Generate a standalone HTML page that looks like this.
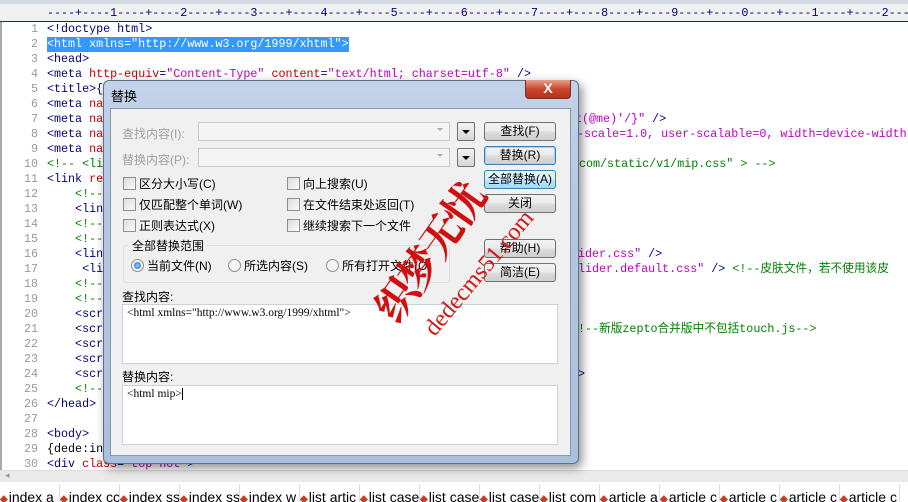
<!DOCTYPE html>
<html><head><meta charset="utf-8"><style>
body{margin:0;width:908px;height:502px;overflow:hidden;background:#fff;position:relative;font-family:"Liberation Mono","Noto Sans CJK SC",monospace}
.a{position:absolute}
.ln{position:absolute;left:0;width:38px;text-align:right;color:#999;font-size:11.7px}
.c{position:absolute;left:47px;font-size:11.7px;white-space:pre;color:#000080;line-height:15px}
.r{color:#c00000}.v{color:#c000c0}.g{color:#008000}.k{color:#000080}
.ui{font-family:"Liberation Sans","Noto Sans CJK SC",sans-serif;font-size:12px;color:#000}
.btn{position:absolute;left:484px;width:70px;height:17px;border:1px solid #707070;border-radius:3px;background:linear-gradient(#f2f2f2,#ebebeb 50%,#dddddd 51%,#cfcfcf);text-align:center;line-height:17px}
.cb{position:absolute;width:11px;height:11px;border:1px solid #8f8f8f;background:linear-gradient(135deg,#dcdcdc,#fbfbfb)}
.rd{position:absolute;width:11px;height:11px;border:1px solid #8f8f8f;border-radius:50%;background:#f4f4f4}
.dd{position:absolute;left:457px;width:16px;height:17px;border:1px solid #707070;border-radius:2px;background:linear-gradient(#f2f2f2,#d6d6d6)}
.dd:after{content:"";position:absolute;left:4px;top:7px;border:4px solid transparent;border-top:4px solid #000;border-bottom:0}
.tab{position:absolute;top:484px;height:18px;width:59px;border-right:1px solid #ddd;font-family:"Liberation Sans",sans-serif;font-size:14px;white-space:nowrap;overflow:hidden;line-height:26px}
.tab b{color:#c0402a;font-size:10px;margin-right:1px}
</style></head><body>
<div class="a" style="left:0;top:0;width:908px;height:4px;background:#d4d9e2"></div>
<div class="a" style="left:0;top:4px;width:908px;height:17px;background:#f0f0f0;border-bottom:1px solid #1a2a6a"></div>
<div class="a" style="left:47px;top:6px;font-size:11.7px;color:#000080;white-space:pre;font-family:'Liberation Mono',monospace">----+----1----+----2----+----3----+----4----+----5----+----6----+----7----+----8----+----9----+----0----+----1----+----2----</div>
<div class="a" style="left:0;top:22px;width:2px;height:450px;background:#aaa"></div>

<div class="ln" style="top:22px">1</div><div class="c" style="top:22px">&lt;!doctype html&gt;</div>
<div class="ln" style="top:37px">2</div><div class="c" style="top:37px;background:#3399ff;color:#fff">&lt;html xmlns="http://www.w3.org/1999/xhtml"&gt;</div>
<div class="ln" style="top:52px">3</div><div class="c" style="top:52px">&lt;head&gt;</div>
<div class="ln" style="top:67px">4</div><div class="c" style="top:67px">&lt;meta <span class="r">http-equiv</span>=<span class="v">"Content-Type"</span> <span class="r">content</span>=<span class="v">"text/html; charset=utf-8"</span> /&gt;</div>
<div class="ln" style="top:82px">5</div><div class="c" style="top:82px">&lt;title&gt;{</div>
<div class="ln" style="top:97px">6</div><div class="c" style="top:97px">&lt;meta <span class="r">na</span></div>
<div class="ln" style="top:112px">7</div><div class="c" style="top:112px">&lt;meta <span class="r">na</span></div>
<div class="ln" style="top:127px">8</div><div class="c" style="top:127px">&lt;meta <span class="r">na</span></div>
<div class="ln" style="top:142px">9</div><div class="c" style="top:142px">&lt;meta <span class="r">na</span></div>
<div class="ln" style="top:157px">10</div><div class="c g" style="top:157px">&lt;!-- &lt;li</div>
<div class="ln" style="top:172px">11</div><div class="c" style="top:172px">&lt;link <span class="r">re</span></div>
<div class="ln" style="top:187px">12</div><div class="c g" style="top:187px">    &lt;!--</div>
<div class="ln" style="top:202px">13</div><div class="c" style="top:202px">    &lt;lin</div>
<div class="ln" style="top:217px">14</div><div class="c g" style="top:217px">    &lt;!--</div>
<div class="ln" style="top:232px">15</div><div class="c g" style="top:232px">    &lt;!--</div>
<div class="ln" style="top:247px">16</div><div class="c" style="top:247px">    &lt;lin</div>
<div class="ln" style="top:262px">17</div><div class="c" style="top:262px">     &lt;li</div>
<div class="ln" style="top:277px">18</div><div class="c g" style="top:277px">    &lt;!--</div>
<div class="ln" style="top:292px">19</div><div class="c g" style="top:292px">    &lt;!--</div>
<div class="ln" style="top:307px">20</div><div class="c" style="top:307px">    &lt;scr</div>
<div class="ln" style="top:322px">21</div><div class="c" style="top:322px">    &lt;scr</div>
<div class="ln" style="top:337px">22</div><div class="c" style="top:337px">    &lt;scr</div>
<div class="ln" style="top:352px">23</div><div class="c" style="top:352px">    &lt;scr</div>
<div class="ln" style="top:367px">24</div><div class="c" style="top:367px">    &lt;scr</div>
<div class="ln" style="top:382px">25</div><div class="c g" style="top:382px">    &lt;!--</div>
<div class="ln" style="top:397px">26</div><div class="c" style="top:397px">&lt;/head&gt;</div>
<div class="ln" style="top:412px">27</div>
<div class="ln" style="top:427px">28</div><div class="c" style="top:427px">&lt;body&gt;</div>
<div class="ln" style="top:442px">29</div><div class="c" style="top:442px;color:#000">{dede:in</div>
<div class="ln" style="top:457px">30</div><div class="c" style="top:457px">&lt;div <span class="r">class</span>=<span class="v">"top hot"</span>&gt;</div>

<div class="c" style="left:575px;top:112px"><span class="v">t(@me)'/}"</span> /&gt;</div>
<div class="c v" style="left:577px;top:127px">-scale=1.0, user-scalable=0, width=device-width</div>
<div class="c g" style="left:579px;top:157px">com/static/v1/mip.css" &gt; --&gt;</div>
<div class="c" style="left:578px;top:247px"><span class="v">ider.css"</span> /&gt;</div>
<div class="c" style="left:578px;top:262px"><span class="v">lider.default.css"</span> /&gt; <span class="g">&lt;!--皮肤文件，若不使用该皮</span></div>
<div class="c g" style="left:578px;top:322px">!--新版zepto合并版中不包括touch.js--&gt;</div>
<div class="c" style="left:578px;top:367px">&gt;</div>

<div class="a" style="left:0;top:470px;width:908px;height:12px;background:#eaeaea;border-top:1px solid #ddd"></div>
<div class="a" style="left:5px;top:471px;font-size:9px;color:#999">◂</div>
<div class="a" style="left:0;top:482px;width:908px;height:20px;background:#fff"></div>
<div class="tab" style="left:0"><b>◆</b>index a</div>
<div class="tab" style="left:60px"><b>◆</b>index cc</div>
<div class="tab" style="left:120px"><b>◆</b>index ss</div>
<div class="tab" style="left:180px"><b>◆</b>index ss</div>
<div class="tab" style="left:240px"><b>◆</b>index w</div>
<div class="tab" style="left:300px"><b>◆</b>list artic</div>
<div class="tab" style="left:360px"><b>◆</b>list case</div>
<div class="tab" style="left:420px"><b>◆</b>list case</div>
<div class="tab" style="left:480px"><b>◆</b>list case</div>
<div class="tab" style="left:540px"><b>◆</b>list com</div>
<div class="tab" style="left:600px"><b>◆</b>article a</div>
<div class="tab" style="left:660px"><b>◆</b>article c</div>
<div class="tab" style="left:720px"><b>◆</b>article c</div>
<div class="tab" style="left:780px"><b>◆</b>article c</div>
<div class="tab" style="left:840px"><b>◆</b>article c</div>

<!-- dialog -->
<div class="a" style="left:103px;top:80px;width:474px;height:382px;border:1px solid #5d6f88;border-radius:6px;background:linear-gradient(180deg,#c3d3e8,#b4c8e2 30%,#a9c0dd);box-shadow:3px 4px 10px rgba(0,0,0,.45)"></div>
<div class="a ui" style="left:111px;top:86px;font-size:13px">替换</div>
<div class="a" style="left:525px;top:80px;width:44px;height:18px;border:1px solid #7a2b22;border-top:0;border-radius:0 0 4px 4px;background:linear-gradient(#e7a08e,#c9462e 50%,#b83118);color:#fff;text-align:center;font:bold 14px 'Liberation Sans',sans-serif;line-height:17px">X</div>
<div class="a" style="left:110px;top:108px;width:459px;height:346px;background:#f0f0f0;border:1px solid #8797ab"></div>

<div class="a ui" style="left:122px;top:125px;color:#a0a0a0">查找内容(I):</div>
<div class="a" style="left:198px;top:122px;width:250px;height:17px;border:1px solid #c8c8c8;background:#f4f4f4"></div>
<div class="a" style="left:437px;top:128px;border:3px solid transparent;border-top:3px solid #aaa"></div>
<div class="dd" style="top:122px"></div>
<div class="a ui" style="left:122px;top:151px;color:#a0a0a0">替换内容(P):</div>
<div class="a" style="left:198px;top:148px;width:250px;height:17px;border:1px solid #c8c8c8;background:#f4f4f4"></div>
<div class="a" style="left:437px;top:154px;border:3px solid transparent;border-top:3px solid #aaa"></div>
<div class="dd" style="top:148px"></div>

<div class="btn ui" style="top:122px">查找(F)</div>
<div class="btn ui" style="top:146px;border-color:#3c7fb1;box-shadow:inset 0 0 0 1px #9ed3f2">替换(R)</div>
<div class="btn ui" style="top:170px;border-color:#3c7fb1;background:linear-gradient(#eaf6fd,#d9f0fc 50%,#bee6fd 51%,#a7d9f5)">全部替换(A)</div>
<div class="btn ui" style="top:194px">关闭</div>
<div class="btn ui" style="top:239px">帮助(H)</div>
<div class="btn ui" style="top:263px">简洁(E)</div>

<div class="cb" style="left:123px;top:177px"></div><div class="a ui" style="left:139px;top:175px">区分大小写(C)</div>
<div class="cb" style="left:123px;top:198px"></div><div class="a ui" style="left:139px;top:196px">仅匹配整个单词(W)</div>
<div class="cb" style="left:123px;top:219px"></div><div class="a ui" style="left:139px;top:217px">正则表达式(X)</div>
<div class="cb" style="left:287px;top:177px"></div><div class="a ui" style="left:303px;top:175px">向上搜索(U)</div>
<div class="cb" style="left:287px;top:198px"></div><div class="a ui" style="left:303px;top:196px">在文件结束处返回(T)</div>
<div class="cb" style="left:287px;top:219px"></div><div class="a ui" style="left:303px;top:217px">继续搜索下一个文件</div>

<div class="a" style="left:123px;top:245px;width:325px;height:36px;border:1px solid #d5dfe5;border-radius:3px"></div>
<div class="a ui" style="left:129px;top:237px;background:#f0f0f0;padding:0 3px">全部替换范围</div>
<div class="rd" style="left:131px;top:259px"></div><div class="a" style="left:134px;top:262px;width:7px;height:7px;border-radius:50%;background:radial-gradient(#8fd0ff,#1e62b8)"></div>
<div class="a ui" style="left:147px;top:257px">当前文件(N)</div>
<div class="rd" style="left:228px;top:259px"></div><div class="a ui" style="left:244px;top:257px">所选内容(S)</div>
<div class="rd" style="left:326px;top:259px"></div><div class="a ui" style="left:342px;top:257px">所有打开文件(O)</div>

<div class="a ui" style="left:122px;top:288px">查找内容:</div>
<div class="a" style="left:122px;top:304px;width:434px;height:58px;border:1px solid #c9d3dd;background:#fff"></div>
<div class="a" style="left:127px;top:307px;font:11.5px 'Liberation Serif','Noto Serif CJK SC',serif">&lt;html xmlns="http://www.w3.org/1999/xhtml"&gt;</div>
<div class="a ui" style="left:122px;top:368px">替换内容:</div>
<div class="a" style="left:122px;top:385px;width:434px;height:58px;border:1px solid #c9d3dd;background:#fff"></div>
<div class="a" style="left:127px;top:388px;font:11.5px 'Liberation Serif',serif">&lt;html mip&gt;<span style="border-left:1px solid #000"></span></div>

<!-- watermark -->
<div class="a" style="left:350px;top:222px;transform:rotate(-55deg);color:#d01010;font:bold 42px 'Noto Serif CJK SC',serif;white-space:nowrap;letter-spacing:-3px">织梦无忧</div>
<div class="a" style="left:402px;top:260px;transform:rotate(-50deg);color:#d01818;font:24px 'Liberation Serif',serif;white-space:nowrap">dedecms51.com</div>
</body></html>
